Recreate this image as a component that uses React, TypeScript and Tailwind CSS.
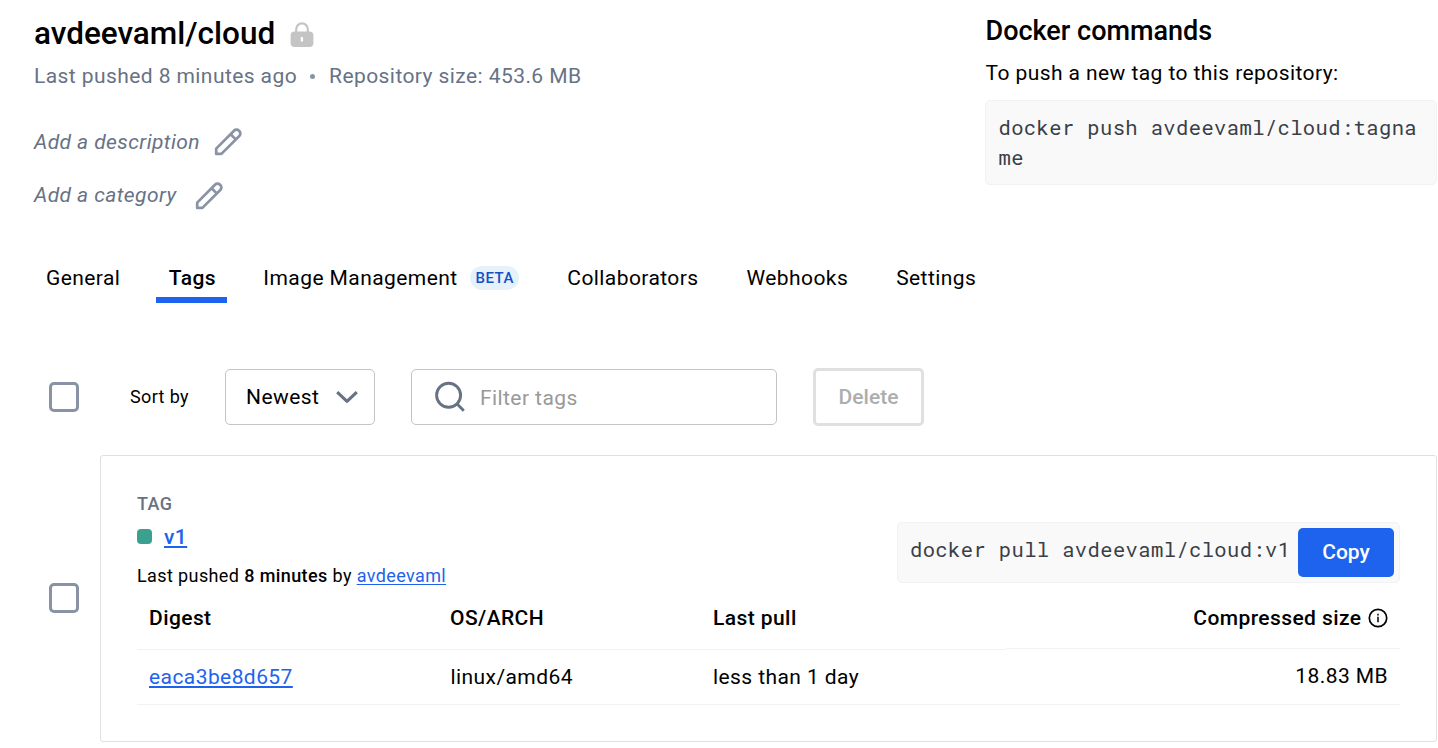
import React from "react";

function LockIcon() {
  return (
    <svg width="24" height="26" viewBox="0 0 24 26" fill="none">
      <path d="M6.2 11V7.2a5.8 5.8 0 0 1 11.6 0V11" stroke="#c4c4c4" strokeWidth="2.2" />
      <rect x="0.6" y="9.4" width="22.8" height="15.6" rx="4" fill="#c4c4c4" />
      <rect x="10.8" y="15" width="2.2" height="4.6" rx="0.6" fill="#fff" />
    </svg>
  );
}

function PencilIcon() {
  return (
    <svg width="28" height="28" viewBox="0 0 28 28" fill="none" stroke="#8993a5" strokeWidth="2.7" strokeLinejoin="round">
      <path d="M2.2 25.9V20.6L20 2.7a3.5 3.5 0 0 1 5 0l.3.3a3.5 3.5 0 0 1 0 5L7.4 25.9Z" />
      <path d="M16.6 6.2L21.8 11.4" />
    </svg>
  );
}

function SearchIcon() {
  return (
    <svg width="32" height="32" viewBox="0 0 32 32" fill="none" stroke="#677285" strokeWidth="2.9">
      <circle cx="13.6" cy="14.2" r="12" />
      <path d="M21.9 22.8L28.8 29.8" />
    </svg>
  );
}

function ChevronIcon() {
  return (
    <svg width="22" height="14" viewBox="0 0 22 14" fill="none" stroke="#677285" strokeWidth="3.1">
      <path d="M1.2 2.1L11 11.3L20.8 2.1" strokeLinejoin="round" />
    </svg>
  );
}

function InfoIcon() {
  return (
    <svg width="20" height="20" viewBox="0 0 20 20" fill="none">
      <circle cx="10" cy="10" r="8.7" stroke="#000" strokeWidth="1.7" />
      <path d="M10 8.8V14.2M10 5.8V7.4" stroke="#000" strokeWidth="1.5" />
    </svg>
  );
}

function Checkbox() {
  return <span role="checkbox" aria-checked="false" className="block size-[30px] rounded-[5px] border-3 border-[#8993a5]" />;
}

const mono = "font-['Roboto_Mono','Noto_Sans_Mono','DejaVu_Sans_Mono',monospace] text-[20.5px] tracking-[0.38px] text-[#393f49]";

function Header() {
  return (
    <header className="flex h-[240px] justify-between">
      <div className="pl-[34px] pt-[13px]">
        <div className="flex h-10 items-center">
          <h1 className="mt-0.5 text-[31.5px] leading-10 font-medium tracking-normal">avdeevaml/cloud</h1>
          <span className="ml-[15px] mt-[3px]"><LockIcon /></span>
        </div>
        <p className="mt-2 flex h-[30px] items-center leading-[30px] text-[#677285]">
          Last pushed 8 minutes ago
          <span className="mr-[14px] ml-[13px] size-[5px] rounded-full bg-[#8993a5]" />
          Repository size: 453.6 MB
        </p>
        <div className="mt-9 flex h-[30px] items-center text-[#677285] italic">
          <span className="mt-0.5">Add a description</span>
          <span className="ml-[13.5px]"><PencilIcon /></span>
        </div>
        <div className="mt-[23px] flex h-[30px] items-center text-[#677285] italic">
          <span className="mt-0.5">Add a category</span>
          <span className="ml-[18.5px] mt-px"><PencilIcon /></span>
        </div>
      </div>
      <aside className="mr-px w-[452px] pt-[13px]">
        <h2 className="pl-[0.5px] text-[27px] leading-9 font-medium tracking-normal">Docker commands</h2>
        <p className="mt-[9px] pl-[0.5px] leading-[30px]">To push a new tag to this repository:</p>
        <div className={`mt-3 h-[85px] rounded-[5px] border border-[#f2f2f2] bg-[#f9f9f9] pt-3 pr-2 pl-[12.5px] leading-[30px] break-all ${mono}`}>
          docker push avdeevaml/cloud:tagname
        </div>
      </aside>
    </header>
  );
}

function Tabs() {
  return (
    <nav className="flex h-[63px] items-start pt-[23px] pl-[34px] leading-[30px]">
      <a className="px-3">General</a>
      <a className="ml-6 h-10 w-[71px] border-b-6 border-[#1d63ed] pl-[12.5px] font-medium">Tags</a>
      <a className="ml-6 flex items-center px-3">
        Image Management
        <span className="ml-[12.5px] h-6 rounded-full bg-[#e5f2fc] px-[5.5px] text-[15px] leading-6 font-medium tracking-[0.45px] text-[#1650c4]">BETA</span>
      </a>
      <a className="ml-6 px-3">Collaborators</a>
      <a className="ml-6 px-3">Webhooks</a>
      <a className="ml-6 px-3">Settings</a>
    </nav>
  );
}

function Toolbar() {
  return (
    <div className="mt-[65px] flex h-[58px] items-center pl-[49px]">
      <Checkbox />
      <span className="mb-0.5 ml-[51px] w-[95px] text-[18px] tracking-[0.36px]">Sort by</span>
      <button className="flex h-14 w-[150px] items-center justify-between rounded-[5px] border border-[#c4c4c4] pr-4 pl-5">
        <span className="mt-0.5">Newest</span>
        <ChevronIcon />
      </button>
      <div className="ml-9 flex h-14 w-[366px] items-center rounded-[5px] border border-[#c4c4c4] pl-[23px] text-[#999]">
        <SearchIcon />
        <span className="mt-[3px] ml-[13px]">Filter tags</span>
      </div>
      <button className="ml-9 h-[58px] w-[111px] rounded-[5px] border-3 border-[#e0e0e0] pt-0.5 font-medium tracking-normal text-[#adadad]">Delete</button>
    </div>
  );
}

function TagCard() {
  return (
    <div className="mt-[29px] flex h-[287px]">
      <div className="w-[100px] pt-32 pl-[49px]"><Checkbox /></div>
      <section className="h-[287px] w-[1337px] rounded-[3px] border border-[#e0e0e0] pt-[35px] pr-9 pl-9">
        <div className="flex h-[103px] justify-between">
          <div>
            <div className="h-[26px] text-[18px] leading-[26px] font-medium tracking-[0.36px] text-[#677285]">TAG</div>
            <div className="mt-1 flex h-[30px] items-center leading-[30px]">
              <span className="mr-3 size-[15px] rounded-[4px] bg-[#3ba08d]" />
              <a className="mt-0.5 font-medium text-[#1d63ed] underline decoration-2 underline-offset-2">v1</a>
            </div>
            <p className="mt-3 text-[18px] leading-[26px] tracking-[0.39px]">
              Last pushed <b className="font-medium">8 minutes</b> by <a className="text-[#1d63ed] underline decoration-1 underline-offset-2">avdeevaml</a>
            </p>
          </div>
          <div className="mt-[31px] flex h-[61px] w-[503px] items-start justify-between rounded-[5px] border border-[#f2f2f2] bg-[#f9f9f9] pt-[5px] pr-[5px] pl-3">
            <code className={`mt-[7px] leading-[30px] whitespace-nowrap ${mono}`}>docker pull avdeevaml/cloud:v1</code>
            <button className="h-[49px] w-24 shrink-0 rounded-[5px] bg-[#1d63ed] font-medium tracking-normal text-white">Copy</button>
          </div>
        </div>
        <div className="grid h-[111px] w-[1263px] grid-cols-[301px_263px_305px_394px] grid-rows-[56px_55px]">
          {["Digest", "OS/ARCH", "Last pull"].map((name) => (
            <div key={name} className="border-b border-[#f2f2f2] pt-[9px] pl-3 leading-[30px] font-medium">{name}</div>
          ))}
          <div className="flex h-[55px] items-start justify-end border-b border-[#f2f2f2] pt-[9px] pr-3 leading-[30px] font-medium">
            Compressed size
            <span className="mt-[5px] ml-[6px] -mr-px pr-[1.5px]"><InfoIcon /></span>
          </div>
          <div className="border-b border-[#f2f2f2] pt-3 pl-3 leading-[30px]">
            <a className="text-[#1d63ed] underline decoration-2 underline-offset-2">eaca3be8d657</a>
          </div>
          <div className="border-b border-[#f2f2f2] pt-3 pl-[12.5px] leading-[30px]">linux/amd64</div>
          <div className="border-b border-[#f2f2f2] pt-3 pl-3 leading-[30px]">less than 1 day</div>
          <div className="border-b border-[#f2f2f2] pt-[11px] pr-3 text-right leading-[30px]">18.83 MB</div>
        </div>
      </section>
    </div>
  );
}

export default function App() {
  return (
    <div className="h-[748px] w-[1438px] overflow-hidden bg-white font-['Roboto',sans-serif] text-[21px] tracking-[0.42px] text-black">
      <Header />
      <Tabs />
      <Toolbar />
      <TagCard />
    </div>
  );
}
